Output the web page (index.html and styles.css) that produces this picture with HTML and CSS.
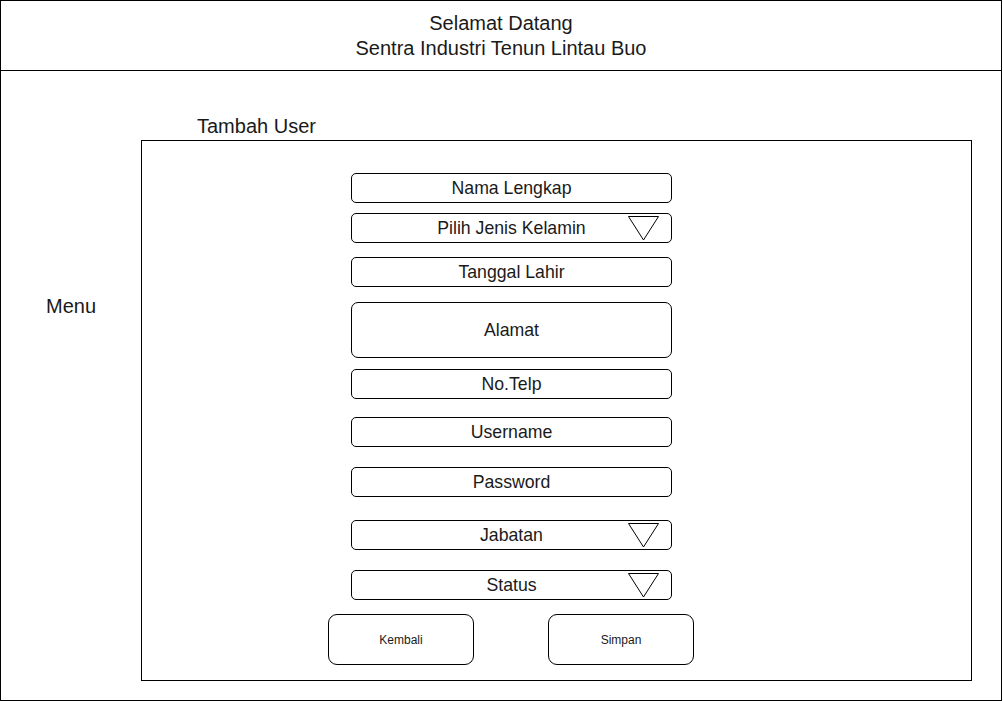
FILE: index.html
```html
<!DOCTYPE html>
<html lang="id">
<head>
<meta charset="utf-8">
<title>Tambah User</title>
<link rel="stylesheet" href="styles.css">
</head>
<body>
<div class="frame">
  <header class="header">
    <div>Selamat Datang</div>
    <div>Sentra Industri Tenun Lintau Buo</div>
  </header>
  <div class="main">
    <nav class="menu">Menu</nav>
    <section class="content">
      <div class="title">Tambah User</div>
      <div class="panel">
        <div class="fields">
          <div class="field">Nama Lengkap</div>
          <div class="field select mt-10">Pilih Jenis Kelamin
            <svg class="caret" width="31" height="25" viewBox="0 0 31 25"><polygon points="0.5,0.5 30.5,0.5 15.5,24" fill="none" stroke="#000" stroke-width="1"/></svg>
          </div>
          <div class="field mt-14">Tanggal Lahir</div>
          <div class="field tall mt-15">Alamat</div>
          <div class="field mt-11">No.Telp</div>
          <div class="field mt-18">Username</div>
          <div class="field mt-20">Password</div>
          <div class="field select mt-23">Jabatan
            <svg class="caret" width="31" height="25" viewBox="0 0 31 25"><polygon points="0.5,0.5 30.5,0.5 15.5,24" fill="none" stroke="#000" stroke-width="1"/></svg>
          </div>
          <div class="field select mt-20">Status
            <svg class="caret" width="31" height="25" viewBox="0 0 31 25"><polygon points="0.5,0.5 30.5,0.5 15.5,24" fill="none" stroke="#000" stroke-width="1"/></svg>
          </div>
        </div>
        <div class="actions">
          <div class="btn">Kembali</div>
          <div class="btn">Simpan</div>
        </div>
      </div>
    </section>
  </div>
</div>
</body>
</html>
```

FILE: styles.css
```css
* { box-sizing: border-box; }
html, body { margin: 0; padding: 0; background: #fff; }
body {
  font-family: "Liberation Sans", Arial, sans-serif;
  color: #1a1a1a;
}
.frame {
  width: 1002px;
  height: 701px;
  border: 1px solid #000;
  display: flex;
  flex-direction: column;
}
.header {
  height: 70px;
  border-bottom: 1px solid #000;
  display: flex;
  flex-direction: column;
  align-items: center;
  justify-content: center;
  font-size: 20px;
  line-height: 25px;
}
.main {
  flex: 1;
  display: flex;
}
.menu {
  width: 140px;
  padding-top: 224px;
  text-align: center;
  font-size: 20px;
  line-height: 23px;
}
.content {
  padding-top: 44px;
}
.title {
  margin-left: 56px;
  margin-bottom: 2px;
  font-size: 20px;
  line-height: 23px;
}
.panel {
  width: 831px;
  height: 541px;
  border: 1px solid #000;
  padding: 32px 0 0 186px;
}
.fields {
  margin-left: 23px;
  display: flex;
  flex-direction: column;
}
.field {
  position: relative;
  width: 321px;
  height: 30px;
  border: 1px solid #000;
  border-radius: 5px;
  display: flex;
  align-items: center;
  justify-content: center;
  font-size: 17.7px;
}
.field.tall {
  height: 56px;
  border-radius: 7px;
}
.caret {
  position: absolute;
  right: 12px;
  top: 2px;
}
.mt-10 { margin-top: 10px; }
.mt-11 { margin-top: 11px; }
.mt-14 { margin-top: 14px; }
.mt-15 { margin-top: 15px; }
.mt-18 { margin-top: 18px; }
.mt-20 { margin-top: 20px; }
.mt-23 { margin-top: 23px; }
.actions {
  display: flex;
  gap: 74px;
  margin-top: 14px;
}
.btn {
  width: 146px;
  height: 51px;
  border: 1px solid #000;
  border-radius: 9px;
  display: flex;
  align-items: center;
  justify-content: center;
  font-size: 12px;
}
```
